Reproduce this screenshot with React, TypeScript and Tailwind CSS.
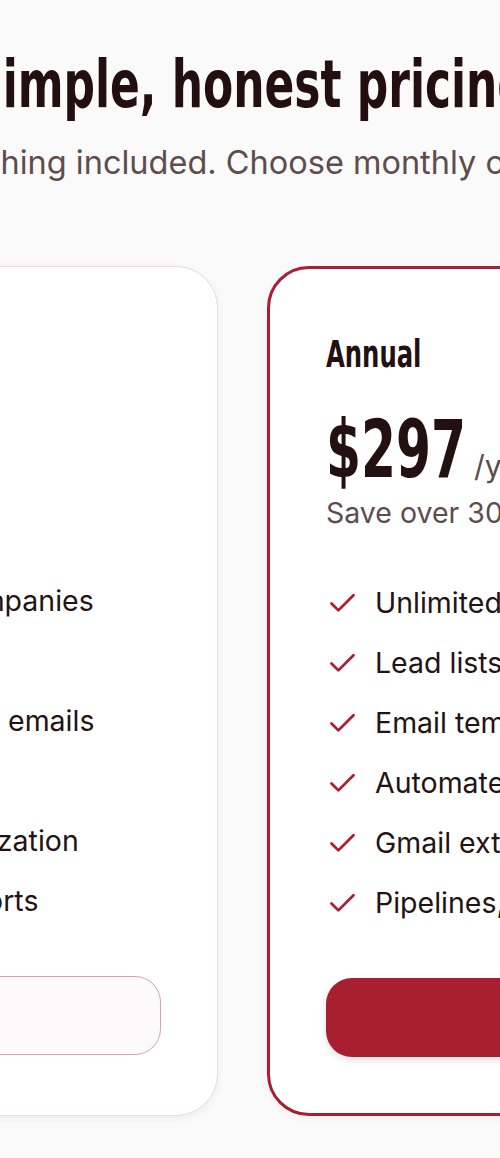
import React from 'react';
import { Check } from 'lucide-react';

interface Plan {
  id: string;
  name: string;
  price: string;
  period: string;
  note: string;
  cta: string;
  featured?: boolean;
}

const features = [
  'Unlimited contacts & companies',
  'Lead lists & tags',
  'Email templates & logged emails',
  'Automated follow-ups',
  'Gmail extension & prioritization',
  'Pipelines, projects & reports',
];

const plans: Plan[] = [
  {
    id: 'monthly',
    name: 'Monthly',
    price: '$29',
    period: '/month',
    note: 'Cancel anytime',
    cta: 'Start monthly',
  },
  {
    id: 'annual',
    name: 'Annual',
    price: '$297',
    period: '/year',
    note: 'Save over 30% vs monthly',
    cta: 'Get annual',
    featured: true,
  },
];

const display = "font-['DejaVu_Sans_Condensed','DejaVu_Sans',sans-serif] font-bold";

const PlanCard: React.FC<{ plan: Plan }> = ({ plan }) => {
  const featured = !!plan.featured;
  return (
    <div
      className={
        featured
          ? 'w-[663px] shrink-0 rounded-[42px] border-[3px] border-[#a81f32] bg-white p-[56px] shadow-[0_2px_10px_rgba(0,0,0,0.05)]'
          : 'w-[663px] shrink-0 rounded-[42px] border-[1.5px] border-[#e8dcdc] bg-white p-[56px] shadow-[0_2px_10px_rgba(0,0,0,0.06)]'
      }
    >
      {/* title */}
      <div className={`${display} mt-[8px] text-[37px] leading-[44px] text-[#231010]`}>
        <span className="inline-block origin-left scale-x-[0.73] whitespace-nowrap">{plan.name}</span>
      </div>

      {/* price */}
      <div className="mt-[32px] flex items-baseline gap-[10px]">
        <span className={`${display} inline-block w-[138px] text-[81px] leading-[80px] text-[#231010]`}>
          <span className="inline-block origin-left scale-x-[0.69] whitespace-nowrap">{plan.price}</span>
        </span>
        <span className="text-[30px] leading-[36px] text-[#5e4d4d]">{plan.period}</span>
      </div>
      <p className="mt-[6px] text-[28.5px] leading-[36px] text-[#5e4d4d] whitespace-nowrap">{plan.note}</p>

      {/* features */}
      <ul className="mt-[54px] flex flex-col gap-[24px]">
        {features.map((f) => (
          <li key={f} className="flex items-center gap-[16px] text-[28.5px] leading-[36px] text-[#241313] whitespace-nowrap">
            <Check size={33} strokeWidth={2} className="shrink-0 text-[#a81f32]" />
            <span>{f}</span>
          </li>
        ))}
      </ul>

      <button
        className={
          featured
            ? 'mt-[57px] h-[79px] w-full rounded-[26px] bg-[#a81f32] text-[28px] font-semibold text-white shadow-[0_3px_8px_rgba(0,0,0,0.12)]'
            : 'mt-[57px] h-[79px] w-full rounded-[26px] border-[1.5px] border-[#e0a0a8] bg-[#fdfafb] text-[28px] font-semibold text-[#a81f32]'
        }
      >
        {plan.cta}
      </button>
    </div>
  );
};

export default function App() {
  return (
    <div className="min-h-screen overflow-hidden bg-[#fafafa] font-['Inter','Noto_Sans',sans-serif]">
      <div className="flex flex-col items-center pt-[47px] pb-[40px]">
        <h1 className={`${display} origin-center scale-x-[0.74] whitespace-nowrap text-[66px] leading-[76px] text-[#230f0f]`}>
          Simple, honest pricing
        </h1>
        <p className="mt-[20px] whitespace-nowrap text-[32.5px] leading-[40px] text-[#5e4d4d]">
          Everything included. Choose monthly or save
        </p>
        <div className="mr-[15px] mt-[83px] flex gap-[49px]">
          {plans.map((p) => (
            <PlanCard key={p.id} plan={p} />
          ))}
        </div>
      </div>
    </div>
  );
}
